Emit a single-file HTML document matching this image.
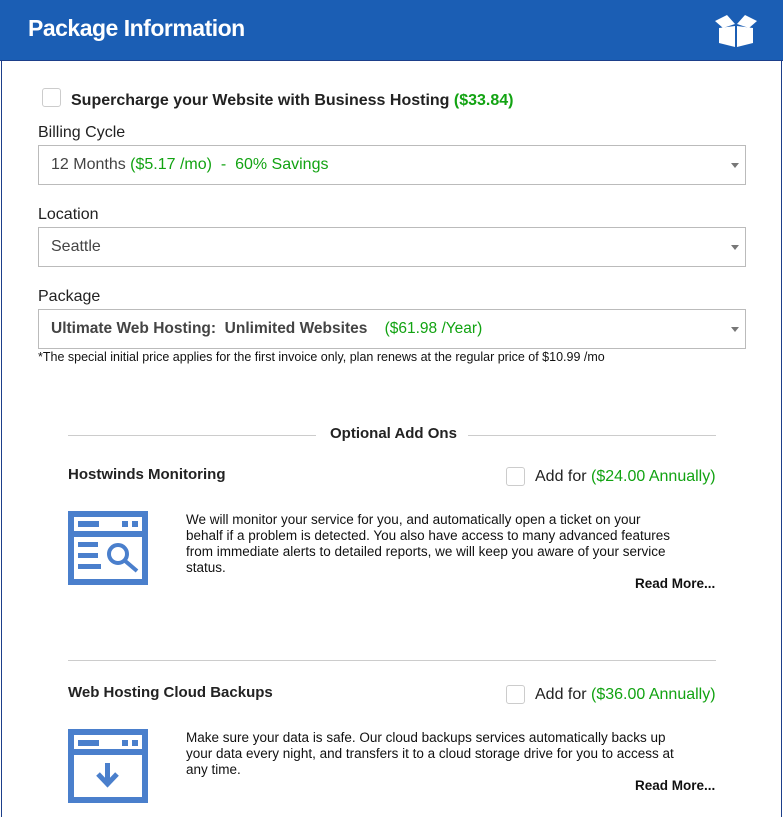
<!DOCTYPE html>
<html><head><meta charset="utf-8"><style>
*{margin:0;padding:0;box-sizing:border-box}
html,body{width:784px;height:817px;overflow:hidden}
body{background:#fff;font-family:"Liberation Sans",Arial,sans-serif;color:#222;position:relative}
.card{position:absolute;left:1px;top:0;width:781px;height:817px;border:1px solid #1d3f8a;border-top:none;border-bottom:none}
.hdr{position:absolute;left:0;top:0;width:783px;height:61px;background:#1b5eb4;border-bottom:1px solid #1d3f8a}
.hdr h1{position:absolute;left:28px;top:15px;color:#fff;font-size:23px;font-weight:bold;letter-spacing:-0.5px}
.abs{position:absolute}
.g{color:#12a312}
.cb{position:absolute;width:19px;height:19px;border:1.5px solid #ccc;border-radius:3px;background:#fff}
.lbl{font-size:16px;color:#222}
.sel{position:absolute;left:38px;width:708px;height:40px;border:1px solid #bbb;font-size:16px;color:#444;padding:10px 0 0 12px}
.sel:after{content:"";position:absolute;right:6px;top:17px;border:4px solid transparent;border-top:5px solid #777}
.b{font-weight:bold}
.desc{position:absolute;left:186px;width:490px;font-size:13.5px;line-height:16px;color:#111}
.rm{position:absolute;font-size:13.5px;font-weight:bold;color:#111}
.hr{position:absolute;height:1px;background:#ccc}
</style></head><body>
<div class="card"></div>
<div class="hdr"><h1>Package Information</h1>
<svg class="abs" style="left:713px;top:14px" width="46" height="34" viewBox="0 0 46 34"><path d="M2 7 L14 1 L22 10 L10 14 Z M44 7 L32 1 L24 10 L36 14 Z" fill="#fff"/><path d="M6 14 L22 12 L22 33 L6 29 Z M24 12 L40 14 L40 29 L24 33 Z" fill="#fff"/></svg>
</div>
<div class="cb" style="left:42px;top:88px"></div>
<div class="abs b" style="left:71px;top:92px;font-size:16px">Supercharge your Website with Business Hosting <span class="g">($33.84)</span></div>
<div class="abs lbl" style="left:38px;top:124px">Billing Cycle</div>
<div class="sel" style="top:145px">12 Months <span class="g">($5.17 /mo) &nbsp;- &nbsp;60% Savings</span></div>
<div class="abs lbl" style="left:38px;top:206px">Location</div>
<div class="sel" style="top:227px">Seattle</div>
<div class="abs lbl" style="left:38px;top:288px">Package</div>
<div class="sel b" style="top:309px;font-size:15.5px">Ultimate Web Hosting: &nbsp;Unlimited Websites &nbsp; &nbsp;<span class="g" style="font-weight:normal">($61.98 /Year)</span></div>
<div class="abs" style="left:38px;top:350px;font-size:12.5px;color:#111">*The special initial price applies for the first invoice only, plan renews at the regular price of $10.99 /mo</div>
<div class="hr" style="left:68px;top:435px;width:248px"></div>
<div class="hr" style="left:468px;top:435px;width:248px"></div>
<div class="abs b" style="left:330px;top:425px;font-size:15px">Optional Add Ons</div>

<div class="abs b" style="left:68px;top:466px;font-size:15px">Hostwinds Monitoring</div>
<div class="cb" style="left:506px;top:467px"></div>
<div class="abs" style="left:535px;top:468px;font-size:16px">Add for <span class="g">($24.00 Annually)</span></div>
<svg class="abs" style="left:0;top:0" width="160" height="817">
<g fill="#4a7fcc">
<path fill-rule="evenodd" d="M68 511H148V585H68Z M74 517V531H142V517Z M74 537V579H142V537Z"/>
<rect x="78" y="521" width="21" height="6"/><rect x="122" y="521" width="6" height="6"/><rect x="132" y="521" width="6" height="6"/>
<rect x="78" y="542" width="20" height="5"/><rect x="78" y="553" width="20" height="5"/><rect x="78" y="564" width="23" height="5"/>
<path fill-rule="evenodd" d="M68 729H148V803H68Z M74 735V749H142V735Z M74 755V797H142V755Z"/>
<rect x="78" y="740" width="21" height="6"/><rect x="122" y="740" width="6" height="6"/><rect x="132" y="740" width="6" height="6"/>
<rect x="105" y="763" width="5" height="22"/>
</g>
<g stroke="#4a7fcc" stroke-width="4" fill="none"><circle cx="118" cy="554" r="9"/><path d="M124 560 L137 571"/><path d="M98 774 L107.5 784 L117 774" stroke-width="5"/></g>
</svg>
<div class="desc" style="top:512px">We will monitor your service for you, and automatically open a ticket on your behalf if a problem is detected. You also have access to many advanced features from immediate alerts to detailed reports, we will keep you aware of your service status.</div>
<div class="rm" style="left:635px;top:576px">Read More...</div>
<div class="hr" style="left:68px;top:660px;width:648px"></div>

<div class="abs b" style="left:68px;top:684px;font-size:15px">Web Hosting Cloud Backups</div>
<div class="cb" style="left:506px;top:685px"></div>
<div class="abs" style="left:535px;top:686px;font-size:16px">Add for <span class="g">($36.00 Annually)</span></div>
<div class="desc" style="top:730px">Make sure your data is safe. Our cloud backups services automatically backs up your data every night, and transfers it to a cloud storage drive for you to access at any time.</div>
<div class="rm" style="left:635px;top:778px">Read More...</div>
</body></html>
